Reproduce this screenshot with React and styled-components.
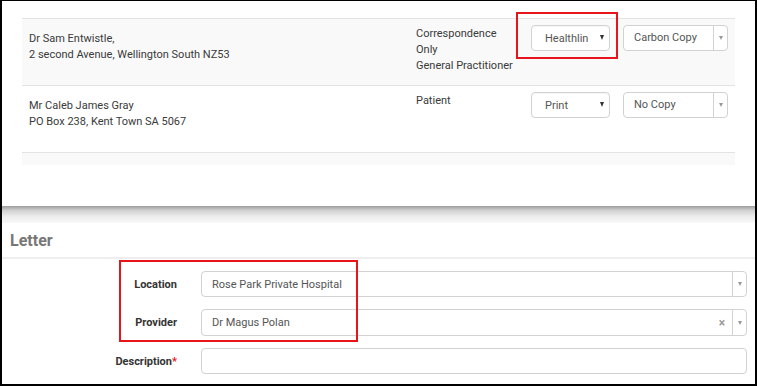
import React from "react";
import styled, { createGlobalStyle } from "styled-components";

const Global = createGlobalStyle`
  html, body { margin: 0; padding: 0; background: #fff; }
  body { font-family: Roboto, "Liberation Sans", Arial, sans-serif; }
  * { box-sizing: border-box; }
`;

const Frame = styled.div`
  width: 757px;
  height: 386px;
  border: 2px solid #000;
  border-top-width: 1px;
  background: #fff;
  display: flex;
  flex-direction: column;
  overflow: hidden;
`;

const TopPanel = styled.div`
  height: 205px;
  padding: 17px 20px 0 20px;
  flex: none;
`;

const Table = styled.div`
  display: flex;
  flex-direction: column;
`;

const Row = styled.div`
  display: grid;
  grid-template-columns: 1fr 115px 92px 105px;
  align-items: start;
  padding: 6px 7px 0 7px;
  height: ${(p) => p.$h}px;
  border-top: 1px solid #e3e3e3;
  background: ${(p) => (p.$alt ? "#f9f9f9" : "#fff")};
  font-size: 11px;
  line-height: 16px;
  color: #3a3a3a;
`;

const NameCell = styled.div`
  padding-top: 6px;
`;

const TypeCell = styled.div`
  padding-top: 1px;
`;

const SelectCell = styled.div`
  position: relative;
`;

const Highlight = styled.div`
  position: absolute;
  left: ${(p) => p.$l}px;
  top: ${(p) => p.$t}px;
  width: ${(p) => p.$w}px;
  height: ${(p) => p.$h}px;
  border: 2px solid #e8141b;
  pointer-events: none;
`;

const NativeSelect = styled.div`
  width: 79px;
  height: 26px;
  border: 1px solid #d2d2d2;
  border-radius: 4px;
  background: #fff;
  display: flex;
  align-items: center;
  justify-content: space-between;
  padding: 1px 5px 0 13px;
  color: #555;
  font-size: 11px;
  box-shadow: inset 0 1px 1px rgba(0, 0, 0, 0.04);
`;

const DarkCaret = styled.span`
  width: 0;
  height: 0;
  border-left: 2.5px solid transparent;
  border-right: 2.5px solid transparent;
  border-top: 5px solid #333;
  margin-top: -2px;
`;

const ComboSelect = styled.div`
  width: ${(p) => p.$w || "105px"};
  height: ${(p) => p.$hgt || 26}px;
  border: 1px solid #d2d2d2;
  border-radius: 4px;
  background: #fff;
  display: flex;
  align-items: stretch;
  color: #555;
  font-size: 11px;
`;

const ComboValue = styled.div`
  flex: 1;
  display: flex;
  align-items: center;
  padding-left: ${(p) => p.$pl || 10}px;
  min-width: 0;
  white-space: nowrap;
`;

const ClearMark = styled.span`
  display: flex;
  align-items: center;
  padding-right: 7px;
  color: #999;
  font-size: 12px;
  font-weight: bold;
`;

const ComboArrow = styled.div`
  width: 14px;
  border-left: 1px solid #d2d2d2;
  display: flex;
  align-items: center;
  justify-content: center;
`;

const GreyCaret = styled.span`
  width: 0;
  height: 0;
  border-left: 2.5px solid transparent;
  border-right: 2.5px solid transparent;
  border-top: 4px solid #999;
`;

const Shadow = styled.div`
  height: 17px;
  flex: none;
  background: linear-gradient(#9d9d9d 0%, #cfcfcf 25%, #ececec 60%, #f8f8f8 100%);
`;

const SectionHeader = styled.div`
  height: 36px;
  flex: none;
  display: flex;
  align-items: center;
  padding-left: 8px;
  border-bottom: 2px solid #eeeeee;
  font-size: 16px;
  font-weight: bold;
  color: #777;
`;

const Form = styled.div`
  position: relative;
  padding: 12px 8px 0 0;
  display: flex;
  flex-direction: column;
  gap: 12px;
`;

const FormRow = styled.div`
  display: grid;
  grid-template-columns: 175px 1fr;
  column-gap: 24px;
  align-items: center;
`;

const Label = styled.label`
  text-align: right;
  font-size: 11px;
  font-weight: bold;
  color: #333;
`;

const Req = styled.span`
  color: #e8141b;
`;

const TextInput = styled.div`
  height: 26px;
  border: 1px solid #d2d2d2;
  border-radius: 4px;
  background: #fff;
`;

const Caret = () => <GreyCaret />;

export default function App() {
  return (
    <>
      <Global />
      <Frame>
        <TopPanel>
          <Table>
            <Row $alt $h={67}>
              <NameCell>
                Dr Sam Entwistle,
                <br />2 second Avenue, Wellington South NZ53
              </NameCell>
              <TypeCell>
                Correspondence
                <br />
                Only
                <br />
                General Practitioner
              </TypeCell>
              <SelectCell>
                <NativeSelect>
                  Healthlin
                  <DarkCaret />
                </NativeSelect>
                <Highlight $l={-15} $t={-13} $w={102} $h={47} />
              </SelectCell>
              <SelectCell>
                <ComboSelect>
                  <ComboValue>Carbon Copy</ComboValue>
                  <ComboArrow>
                    <Caret />
                  </ComboArrow>
                </ComboSelect>
              </SelectCell>
            </Row>
            <Row $h={67}>
              <NameCell>
                Mr Caleb James Gray
                <br />
                PO Box 238, Kent Town SA 5067
              </NameCell>
              <TypeCell>Patient</TypeCell>
              <SelectCell>
                <NativeSelect>
                  Print
                  <DarkCaret />
                </NativeSelect>
              </SelectCell>
              <SelectCell>
                <ComboSelect>
                  <ComboValue>No Copy</ComboValue>
                  <ComboArrow>
                    <Caret />
                  </ComboArrow>
                </ComboSelect>
              </SelectCell>
            </Row>
            <Row $alt $h={13} />
          </Table>
        </TopPanel>
        <Shadow />
        <SectionHeader>Letter</SectionHeader>
        <Form>
          <Highlight $l={117} $t={1} $w={239} $h={82} />
          <FormRow>
            <Label>Location</Label>
            <ComboSelect $w="100%">
              <ComboValue>Rose Park Private Hospital</ComboValue>
              <ComboArrow>
                <Caret />
              </ComboArrow>
            </ComboSelect>
          </FormRow>
          <FormRow>
            <Label>Provider</Label>
            <ComboSelect $w="100%" $hgt={27}>
              <ComboValue>Dr Magus Polan</ComboValue>
              <ClearMark>×</ClearMark>
              <ComboArrow>
                <Caret />
              </ComboArrow>
            </ComboSelect>
          </FormRow>
          <FormRow>
            <Label>
              Description<Req>*</Req>
            </Label>
            <TextInput />
          </FormRow>
        </Form>
      </Frame>
    </>
  );
}
